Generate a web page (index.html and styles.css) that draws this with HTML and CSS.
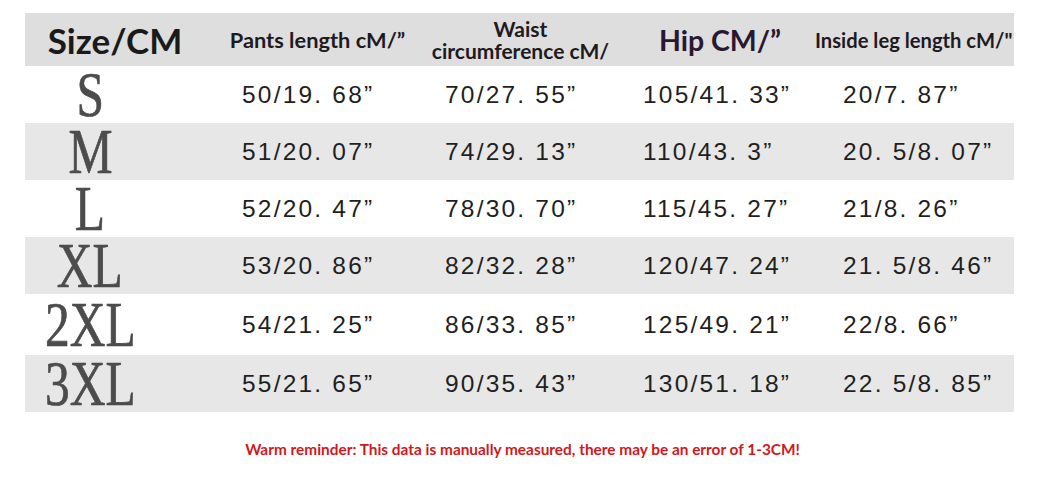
FILE: index.html
```html
<!DOCTYPE html>
<html>
<head>
<meta charset="utf-8">
<link rel="stylesheet" href="styles.css">
</head>
<body>
<div class="chart">
  <div class="row head">
    <div class="h h-size">Size/CM</div>
    <div class="h h-pants">Pants length cM/”</div>
    <div class="h h-waist">Waist<br>circumference cM/</div>
    <div class="h h-hip">Hip CM/”</div>
    <div class="h h-leg">Inside leg length cM/"</div>
  </div>
  <div class="row">
    <div class="size"><span>S</span></div>
    <div class="d c2">50/19. 68”</div>
    <div class="d c3">70/27. 55”</div>
    <div class="d c4">105/41. 33”</div>
    <div class="d c5">20/7. 87”</div>
  </div>
  <div class="row grey">
    <div class="size"><span>M</span></div>
    <div class="d c2">51/20. 07”</div>
    <div class="d c3">74/29. 13”</div>
    <div class="d c4">110/43. 3”</div>
    <div class="d c5">20. 5/8. 07”</div>
  </div>
  <div class="row">
    <div class="size"><span>L</span></div>
    <div class="d c2">52/20. 47”</div>
    <div class="d c3">78/30. 70”</div>
    <div class="d c4">115/45. 27”</div>
    <div class="d c5">21/8. 26”</div>
  </div>
  <div class="row grey">
    <div class="size"><span>XL</span></div>
    <div class="d c2">53/20. 86”</div>
    <div class="d c3">82/32. 28”</div>
    <div class="d c4">120/47. 24”</div>
    <div class="d c5">21. 5/8. 46”</div>
  </div>
  <div class="row tall">
    <div class="size"><span>2XL</span></div>
    <div class="d c2">54/21. 25”</div>
    <div class="d c3">86/33. 85”</div>
    <div class="d c4">125/49. 21”</div>
    <div class="d c5">22/8. 66”</div>
  </div>
  <div class="row grey">
    <div class="size"><span>3XL</span></div>
    <div class="d c2">55/21. 65”</div>
    <div class="d c3">90/35. 43”</div>
    <div class="d c4">130/51. 18”</div>
    <div class="d c5">22. 5/8. 85”</div>
  </div>
</div>
<p class="note">Warm reminder: This data is manually measured, there may be an error of 1-3CM!</p>
</body>
</html>
```

FILE: styles.css
```css
html, body {
  margin: 0;
  padding: 0;
  background: #ffffff;
}

.chart {
  margin: 13px 0 0 25px;
  width: 989px;
}

.row {
  display: grid;
  grid-template-columns: 190px 205px 205px 190px 199px;
  height: 57px;
  align-items: center;
}

.row.grey {
  background: #e7e7e7;
}

.row.tall {
  height: 61px;
}

.row.head {
  height: 53px;
  background: #dedede;
}

.h {
  font-family: Lato, "Liberation Sans", sans-serif;
  font-weight: 700;
  color: #1e1a1e;
  text-align: center;
  line-height: 22px;
  white-space: nowrap;
}

.h-size {
  font-size: 35px;
  padding-right: 10px;
  color: #1a1a1a;
}

.h-pants {
  font-size: 21.8px;
}

.h-waist {
  font-size: 21px;
  padding-right: 4px;
}

.h-hip {
  font-size: 28.5px;
  color: #2a1730;
}

.h-leg {
  font-size: 20.2px;
  padding-right: 6px;
}

.size {
  text-align: center;
  padding-right: 60px;
  font-family: "Liberation Serif", serif;
  font-size: 55px;
  line-height: 50px;
  color: #4c4c4c;
  -webkit-text-stroke: 0.6px #4c4c4c;
}

.size span {
  display: inline-block;
  transform: scale(0.9, 1.15);
}

.d {
  font-family: "Liberation Sans", sans-serif;
  font-size: 24.5px;
  letter-spacing: 2.2px;
  color: #1f1f1f;
  white-space: nowrap;
}

.c2 { padding-left: 27px; }
.c3 { padding-left: 25px; }
.c4 { padding-left: 18px; }
.c5 { padding-left: 28px; }

.note {
  margin: 27px 0 0 0;
  text-align: center;
  width: 1045px;
  font-family: Lato, "Liberation Sans", sans-serif;
  font-weight: 700;
  font-size: 15.4px;
  line-height: 20px;
  color: #d2191c;
}
```
